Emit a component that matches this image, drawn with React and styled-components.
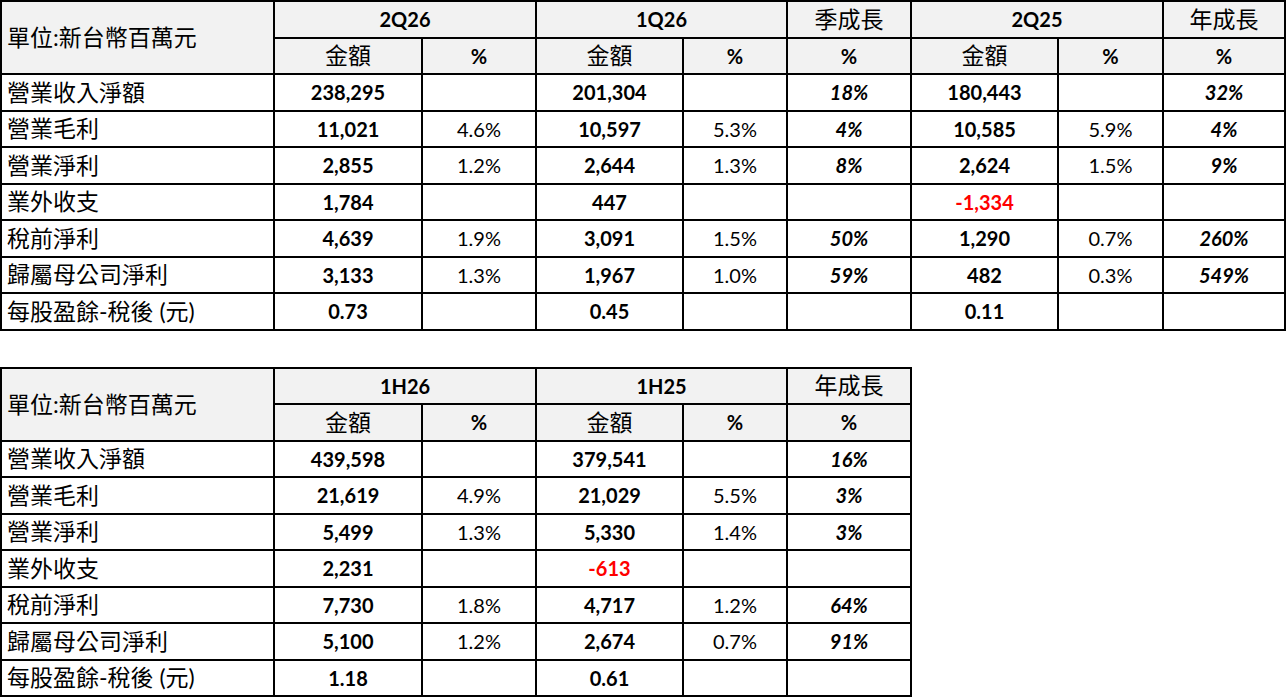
import React from "react";
import styled, { createGlobalStyle } from "styled-components";

const GlobalStyle = createGlobalStyle`
  body {
    margin: 0;
    background: #ffffff;
    font-family: Lato, "Noto Sans CJK TC", sans-serif;
    color: #000000;
  }
`;

const quarterly = {
  groups: [
    { title: "2Q26", cols: ["amt", "pct"] },
    { title: "1Q26", cols: ["amt", "pct"] },
    { title: "季成長", cols: ["growth"], cjk: true },
    { title: "2Q25", cols: ["amt", "pct"] },
    { title: "年成長", cols: ["growth"], cjk: true },
  ],
  widths: [273, 148, 114, 147, 104, 124, 147, 105, 122],
  rows: [
    ["營業收入淨額", "238,295", "", "201,304", "", "18%", "180,443", "", "32%"],
    ["營業毛利", "11,021", "4.6%", "10,597", "5.3%", "4%", "10,585", "5.9%", "4%"],
    ["營業淨利", "2,855", "1.2%", "2,644", "1.3%", "8%", "2,624", "1.5%", "9%"],
    ["業外收支", "1,784", "", "447", "", "", "-1,334", "", ""],
    ["稅前淨利", "4,639", "1.9%", "3,091", "1.5%", "50%", "1,290", "0.7%", "260%"],
    ["歸屬母公司淨利", "3,133", "1.3%", "1,967", "1.0%", "59%", "482", "0.3%", "549%"],
    ["每股盈餘-稅後 (元)", "0.73", "", "0.45", "", "", "0.11", "", ""],
  ],
};

const halfYear = {
  groups: [
    { title: "1H26", cols: ["amt", "pct"] },
    { title: "1H25", cols: ["amt", "pct"] },
    { title: "年成長", cols: ["growth"], cjk: true },
  ],
  widths: [273, 148, 114, 147, 104, 124],
  rows: [
    ["營業收入淨額", "439,598", "", "379,541", "", "16%"],
    ["營業毛利", "21,619", "4.9%", "21,029", "5.5%", "3%"],
    ["營業淨利", "5,499", "1.3%", "5,330", "1.4%", "3%"],
    ["業外收支", "2,231", "", "-613", "", ""],
    ["稅前淨利", "7,730", "1.8%", "4,717", "1.2%", "64%"],
    ["歸屬母公司淨利", "5,100", "1.2%", "2,674", "0.7%", "91%"],
    ["每股盈餘-稅後 (元)", "1.18", "", "0.61", "", ""],
  ],
};

const FinTable = ({ data }) => {
  const kinds = data.groups.flatMap((g) => g.cols);
  const total = data.widths.reduce((a, b) => a + b, 0);

  return (
    <Table style={{ width: total }}>
      <colgroup>
        {data.widths.map((w, i) => (
          <col key={i} style={{ width: w }} />
        ))}
      </colgroup>
      <thead>
        <Row>
          <UnitCell rowSpan={2}>單位:新台幣百萬元</UnitCell>
          {data.groups.map((g) => (
            <GroupCell key={g.title} colSpan={g.cols.length} $cjk={g.cjk}>
              {g.title}
            </GroupCell>
          ))}
        </Row>
        <Row>
          {kinds.map((k, i) => (
            <SubCell key={i} $kind={k}>
              {k === "amt" ? "金額" : "%"}
            </SubCell>
          ))}
        </Row>
      </thead>
      <tbody>
        {data.rows.map(([label, ...vals]) => (
          <Row key={label}>
            <Label>{label}</Label>
            {vals.map((v, i) => (
              <Value key={i} $kind={kinds[i]} $neg={v.startsWith("-")}>
                {v}
              </Value>
            ))}
          </Row>
        ))}
      </tbody>
    </Table>
  );
};

const App = () => {
  return (
    <>
      <GlobalStyle />
      <Page>
        <FinTable data={quarterly} />
        <FinTable data={halfYear} />
      </Page>
    </>
  );
};

const Page = styled.div`
  display: flex;
  flex-direction: column;
  align-items: flex-start;
  gap: 36px;
`;

const Table = styled.table`
  table-layout: fixed;
  border-collapse: collapse;
  border: 2px solid #000;
`;

const Row = styled.tr`
  height: 36.5px;
`;

const Cell = styled.td`
  border: 2px solid #000;
  padding: 0 4px;
  text-align: center;
  vertical-align: middle;
  white-space: nowrap;
  line-height: 1;
`;

const HeadCell = styled(Cell).attrs({ as: "th" })`
  background: #f2f2f2;
`;

const UnitCell = styled(HeadCell)`
  text-align: left;
  font-size: 23px;
  font-weight: 400;
  padding-left: 5px;
`;

const GroupCell = styled(HeadCell)`
  font-size: ${(p) => (p.$cjk ? "23px" : "20px")};
  font-weight: ${(p) => (p.$cjk ? 400 : 700)};
`;

const SubCell = styled(HeadCell)`
  font-size: ${(p) => (p.$kind === "amt" ? "23px" : "20px")};
  font-weight: ${(p) => (p.$kind === "amt" ? 400 : 700)};
  border-left-width: ${(p) => (p.$kind === "pct" ? "1px" : "2px")};
`;

const Label = styled(Cell)`
  text-align: left;
  font-size: 23px;
  padding-left: 5px;
`;

const Value = styled(Cell)`
  font-size: 20px;
  font-weight: ${(p) => (p.$kind === "pct" ? 400 : 700)};
  font-style: ${(p) => (p.$kind === "growth" ? "italic" : "normal")};
  color: ${(p) => (p.$neg ? "#ff0000" : "#000")};
  border-left-width: ${(p) => (p.$kind === "pct" ? "1px" : "2px")};
`;

export default App;
